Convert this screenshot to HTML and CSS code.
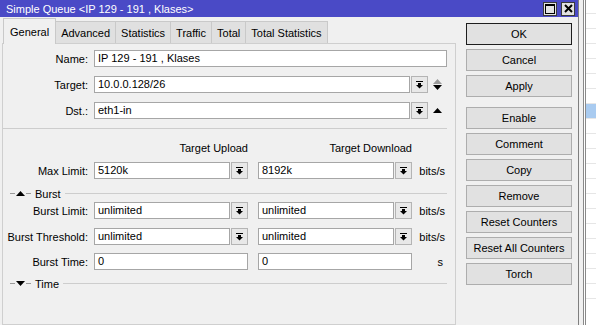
FILE: index.html
```html
<!DOCTYPE html>
<html>
  <head>
    <title>Simple Queue</title>
    <link rel="stylesheet" href="styles.css">
  </head>
  <body>
    <div class="screen">
      <div class="window">
        <div class="titlebar">
          <span class="title">Simple Queue &lt;IP 129 - 191 , Klases&gt;</span>
          <div class="title-btns">
            <span class="tbtn">
              <svg width="10" height="10" viewBox="0 0 10 10"><rect x="0.5" y="0.5" width="9" height="9" fill="none" stroke="#000"/><rect x="0" y="0" width="10" height="2" fill="#000"/></svg>
            </span>
            <span class="tbtn">
              <svg width="9" height="9" viewBox="0 0 9 9"><path d="M1 1L8 8M8 1L1 8" stroke="#000" stroke-width="2"/></svg>
            </span>
          </div>
        </div>
        <div class="body">
          <div class="main">
            <div class="tabs">
              <span class="tab active">General</span>
              <span class="tab">Advanced</span>
              <span class="tab">Statistics</span>
              <span class="tab">Traffic</span>
              <span class="tab">Total</span>
              <span class="tab">Total Statistics</span>
            </div>
            <div class="panel">
              <div class="row">
                <span class="label">Name:</span>
                <div class="field w-name">IP 129 - 191 , Klases</div>
              </div>
              <div class="row">
                <span class="label">Target:</span>
                <div class="field w-target">10.0.0.128/26</div>
                <span class="dd"><svg width="7" height="8" viewBox="0 0 7 8"><rect x="0" y="0" width="7" height="1"/><rect x="2" y="2" width="3" height="2"/><path d="M0 4H7L3.5 7.5Z"/></svg></span>
                <span class="spin">
                  <svg width="9" height="5" viewBox="0 0 9 5"><path d="M0 5L4.5 0L9 5Z" fill="#9a9a9a"/></svg>
                  <svg width="9" height="5" viewBox="0 0 9 5"><path d="M0 0H9L4.5 5Z"/></svg>
                </span>
              </div>
              <div class="row">
                <span class="label">Dst.:</span>
                <div class="field w-target">eth1-in</div>
                <span class="dd"><svg width="7" height="8" viewBox="0 0 7 8"><rect x="0" y="0" width="7" height="1"/><rect x="2" y="2" width="3" height="2"/><path d="M0 4H7L3.5 7.5Z"/></svg></span>
                <span class="spin">
                  <svg width="9" height="5" viewBox="0 0 9 5"><path d="M0 5L4.5 0L9 5Z"/></svg>
                </span>
              </div>
              <div class="divider"></div>
              <div class="heads">
                <span class="head">Target Upload</span>
                <span class="head">Target Download</span>
              </div>
              <div class="row before-toggle">
                <span class="label">Max Limit:</span>
                <div class="field w-half">5120k</div>
                <span class="dd"><svg width="7" height="8" viewBox="0 0 7 8"><rect x="0" y="0" width="7" height="1"/><rect x="2" y="2" width="3" height="2"/><path d="M0 4H7L3.5 7.5Z"/></svg></span>
                <div class="field w-half">8192k</div>
                <span class="dd"><svg width="7" height="8" viewBox="0 0 7 8"><rect x="0" y="0" width="7" height="1"/><rect x="2" y="2" width="3" height="2"/><path d="M0 4H7L3.5 7.5Z"/></svg></span>
                <span class="unit">bits/s</span>
              </div>
              <div class="toggle">
                <span class="dash"></span>
                <svg class="tri" width="9" height="5" viewBox="0 0 9 5"><path d="M0 5L4.5 0L9 5Z"/></svg>
                <span class="dash"></span>
                <span class="toggle-label">Burst</span>
                <span class="line"></span>
              </div>
              <div class="row">
                <span class="label">Burst Limit:</span>
                <div class="field w-half">unlimited</div>
                <span class="dd"><svg width="7" height="8" viewBox="0 0 7 8"><rect x="0" y="0" width="7" height="1"/><rect x="2" y="2" width="3" height="2"/><path d="M0 4H7L3.5 7.5Z"/></svg></span>
                <div class="field w-half">unlimited</div>
                <span class="dd"><svg width="7" height="8" viewBox="0 0 7 8"><rect x="0" y="0" width="7" height="1"/><rect x="2" y="2" width="3" height="2"/><path d="M0 4H7L3.5 7.5Z"/></svg></span>
                <span class="unit">bits/s</span>
              </div>
              <div class="row short">
                <span class="label">Burst Threshold:</span>
                <div class="field w-half">unlimited</div>
                <span class="dd"><svg width="7" height="8" viewBox="0 0 7 8"><rect x="0" y="0" width="7" height="1"/><rect x="2" y="2" width="3" height="2"/><path d="M0 4H7L3.5 7.5Z"/></svg></span>
                <div class="field w-half">unlimited</div>
                <span class="dd"><svg width="7" height="8" viewBox="0 0 7 8"><rect x="0" y="0" width="7" height="1"/><rect x="2" y="2" width="3" height="2"/><path d="M0 4H7L3.5 7.5Z"/></svg></span>
                <span class="unit">bits/s</span>
              </div>
              <div class="row last">
                <span class="label">Burst Time:</span>
                <div class="field w-time">0</div>
                <div class="field w-time">0</div>
                <span class="unit unit-s">s</span>
              </div>
              <div class="toggle">
                <span class="dash"></span>
                <svg class="tri" width="9" height="5" viewBox="0 0 9 5"><path d="M0 0H9L4.5 5Z"/></svg>
                <span class="dash"></span>
                <span class="toggle-label">Time</span>
                <span class="line"></span>
              </div>
            </div>
          </div>
          <div class="actions">
            <span class="btn default">OK</span>
            <span class="btn">Cancel</span>
            <span class="btn">Apply</span>
            <span class="btn spaced">Enable</span>
            <span class="btn">Comment</span>
            <span class="btn">Copy</span>
            <span class="btn">Remove</span>
            <span class="btn">Reset Counters</span>
            <span class="btn">Reset All Counters</span>
            <span class="btn">Torch</span>
          </div>
        </div>
      </div>
      <div class="behind">
        <div class="list">
          <div class="list-row"></div>
          <div class="list-row"></div>
          <div class="list-row"></div>
          <div class="list-row"></div>
          <div class="list-row"></div>
          <div class="list-row"></div>
          <div class="list-row selected"></div>
          <div class="list-row"></div>
          <div class="list-row"></div>
          <div class="list-row"></div>
          <div class="list-row"></div>
          <div class="list-row"></div>
          <div class="list-row"></div>
          <div class="list-row"></div>
          <div class="list-row"></div>
          <div class="list-row"></div>
          <div class="list-row"></div>
          <div class="list-row"></div>
          <div class="list-row"></div>
          <div class="list-row"></div>
        </div>
      </div>
    </div>
  </body>
</html>
```

FILE: styles.css
```css
html,
body {
  margin: 0;
  height: 325px;
  overflow: hidden;
}

body {
  font-family: "Liberation Sans", Arial, sans-serif;
  font-size: 11px;
  color: #000000;
  background-color: #f0f0f0;
}

.screen {
  display: flex;
  height: 325px;
}

.window {
  width: 579px;
  flex-shrink: 0;
  box-sizing: border-box;
  border-right: 1px solid #7f7f7f;
  background-color: #f0f0f0;
  display: flex;
  flex-direction: column;
}

.titlebar {
  height: 17px;
  background-color: #4a4ac6;
  color: #ffffff;
  display: flex;
  align-items: center;
  justify-content: space-between;
  padding: 0 3px 0 6px;
}

.title-btns {
  display: flex;
  column-gap: 4px;
}

.tbtn {
  width: 14px;
  height: 14px;
  box-sizing: border-box;
  border: 1px solid #3a3a3a;
  background-color: #e2e2e2;
  display: flex;
  justify-content: center;
  align-items: center;
}

.body {
  display: flex;
  flex: 1;
}

.main {
  width: 454px;
  margin-left: 2px;
  display: flex;
  flex-direction: column;
}

.tabs {
  height: 26px;
  display: flex;
  align-items: flex-end;
  padding-left: 1px;
}

.tab {
  height: 22px;
  box-sizing: border-box;
  padding: 0 5px;
  border: 1px solid #c9c9c9;
  border-bottom: none;
  margin-left: -1px;
  background-color: #e0e0e0;
  display: flex;
  align-items: center;
}

.tab.active {
  height: 26px;
  margin-left: 0;
  margin-bottom: -1px;
  padding: 0 6px;
  background-color: #f0f0f0;
  position: relative;
  z-index: 1;
}

.panel {
  flex: 1;
  border: 1px solid #cfcfcf;
  background-color: #f0f0f0;
  padding-top: 6px;
}

.row {
  height: 17px;
  display: flex;
  align-items: center;
  margin-bottom: 9px;
}

.row.before-toggle {
  margin-bottom: 6px;
}

.row.short {
  margin-bottom: 8px;
}

.row.last {
  margin-bottom: 5px;
}

.label {
  width: 91px;
  flex-shrink: 0;
  box-sizing: border-box;
  padding-right: 6px;
  text-align: right;
  white-space: nowrap;
}

.field {
  height: 17px;
  box-sizing: border-box;
  border: 1px solid #a6a6a6;
  background-color: #ffffff;
  padding: 0 3px;
  line-height: 15px;
  white-space: nowrap;
  overflow: hidden;
}

.dd + .field,
.field + .field {
  margin-left: 10px;
}

.w-name {
  width: 353px;
}

.w-target {
  width: 316px;
}

.w-half {
  width: 136px;
}

.w-time {
  width: 154px;
}

.dd {
  width: 17px;
  height: 17px;
  margin-left: 1px;
  box-sizing: border-box;
  border: 1px solid #b4b4b4;
  background-color: #e8e8e8;
  display: flex;
  justify-content: center;
  align-items: center;
}

.spin {
  margin-left: 5px;
  display: flex;
  flex-direction: column;
  row-gap: 1px;
}

.spin svg {
  display: block;
}

.unit {
  width: 33px;
  text-align: right;
}

.unit-s {
  width: 31px;
}

.divider {
  height: 1px;
  margin-right: 8px;
  background-color: #cdcdcd;
}

.heads {
  height: 17px;
  margin: 10px 0 6px;
  padding-left: 91px;
  display: flex;
  align-items: center;
  column-gap: 10px;
}

.head {
  width: 154px;
  text-align: right;
}

.toggle {
  height: 17px;
  padding: 0 8px 0 7px;
  display: flex;
  align-items: center;
}

.dash {
  width: 5px;
  height: 1px;
  background-color: #9a9a9a;
}

.tri {
  margin: 0 1px;
}

.toggle-label {
  margin: 0 4px;
}

.line {
  flex: 1;
  height: 1px;
  background-color: #cdcdcd;
}

.actions {
  width: 106px;
  margin-left: 10px;
  padding-top: 6px;
  display: flex;
  flex-direction: column;
  row-gap: 4px;
}

.btn {
  height: 22px;
  box-sizing: border-box;
  border: 1px solid #adadad;
  background-color: #e1e1e1;
  display: flex;
  justify-content: center;
  align-items: center;
  white-space: nowrap;
}

.btn.default {
  border-color: #1e1e1e;
}

.btn.spaced {
  margin-top: 6px;
}

.behind {
  flex: 1;
  padding-left: 4px;
  background-color: #f0f0f0;
  display: flex;
}

.list {
  flex: 1;
  border-left: 3px double #8a8a8a;
  background-color: #ffffff;
  padding-top: 13px;
}

.list-row {
  height: 15px;
  box-sizing: border-box;
  border-top: 1px solid #e6e6e6;
}

.list-row.selected {
  background-color: #a9cbf0;
}
```
